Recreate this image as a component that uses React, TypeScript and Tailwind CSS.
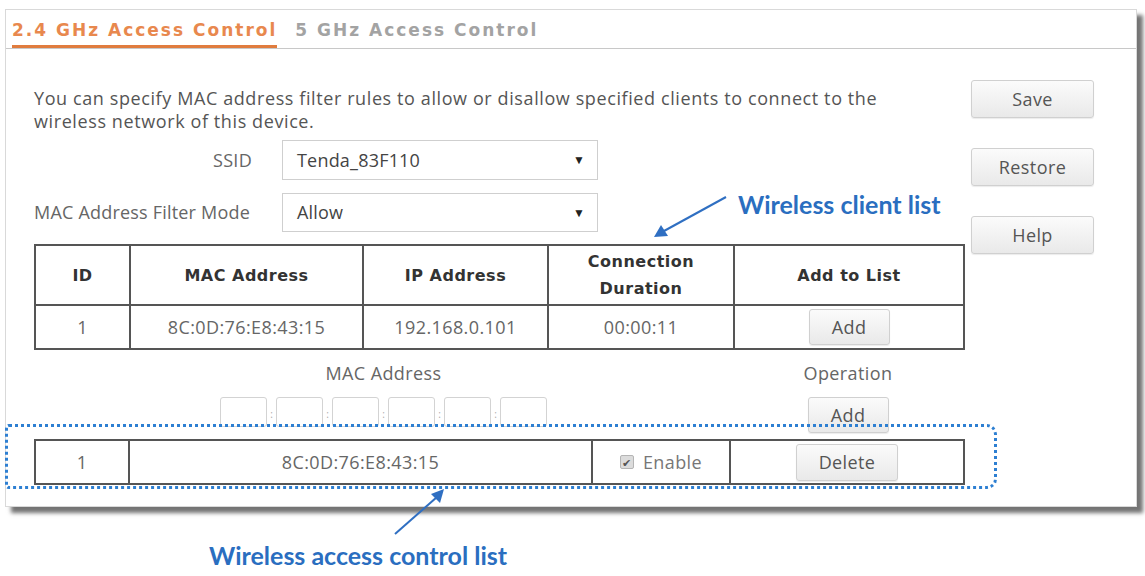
// Tenda router — wireless access control page (doc figure with callouts)

const BODY = { fontFamily: '"Open Sans", "Noto Sans", sans-serif' };
const HEAD = { fontFamily: '"DejaVu Sans", Verdana, sans-serif' };
const NOTE = { fontFamily: 'Lato, "Open Sans", sans-serif' };

const btn =
  'flex items-center justify-center rounded-[3px] border border-[#d0d0d0] bg-gradient-to-b from-[#fbfbfb] to-[#e9e9e9] text-[18px] tracking-[0.4px] text-[#555] shadow-[0_1px_1px_rgba(0,0,0,0.08)]';

function Select({ value, h }: { value: string; h: string }) {
  return (
    <div className={`flex w-[316px] ${h} items-center justify-between border border-[#cfcfcf] bg-white pl-[14px] pr-[12px] text-[18px] tracking-[0.2px] text-[#444]`}>
      <span>{value}</span>
      <span className="text-[12px] text-[#222]">▼</span>
    </div>
  );
}

const cell = 'border-2 border-[#555] text-center';

export default function App() {
  const macBoxes = [0, 1, 2, 3, 4, 5];
  return (
    <div className="relative h-[576px] w-[1145px] overflow-hidden bg-white" style={BODY}>
      {/* panel */}
      <div className="ml-[5px] mt-[9px] h-[498px] w-[1132px] border border-[#d9d9d9] bg-white shadow-[6px_6px_4px_rgba(0,0,0,0.55)]">
        {/* tabs */}
        <div className="flex h-[39px] items-end gap-[18px] border-b border-[#c8c8c8] pl-[6px]" style={HEAD}>
          <span className="border-b-[3px] border-[#e07c3e] pb-[2px] text-[17px] font-bold tracking-[2px] text-[#e8884e]">
            2.4 GHz Access Control
          </span>
          <span className="pb-[5px] text-[17px] font-bold tracking-[2px] text-[#a3a3a3]">5 GHz Access Control</span>
        </div>

        <div className="flex">
          {/* main column */}
          <div className="w-[957px] pl-[28px] pt-[38px]">
            <p className="text-[18px] leading-[23px] tracking-[0.6px] text-[#555]">
              You can specify MAC address filter rules to allow or disallow specified clients to connect to the
              <br />
              wireless network of this device.
            </p>

            <div className="mt-[7px] flex items-center gap-[30px]">
              <span className="w-[218px] text-right text-[18px] tracking-[0.3px] text-[#666]">SSID</span>
              <Select value="Tenda_83F110" h="h-[40px]" />
            </div>
            <div className="mt-[13px] flex items-center gap-[30px]">
              <span className="w-[218px] whitespace-nowrap text-left text-[18px] tracking-[0.2px] text-[#666]">
                MAC Address Filter Mode
              </span>
              <Select value="Allow" h="h-[39px]" />
            </div>

            {/* wireless client list */}
            <table className="mt-[12px] w-[929px] table-fixed border-collapse">
              <colgroup>
                <col className="w-[95px]" />
                <col className="w-[233px]" />
                <col className="w-[185px]" />
                <col className="w-[186px]" />
                <col className="w-[230px]" />
              </colgroup>
              <thead>
                <tr className="h-[60px] text-[16px] font-bold leading-[27px] tracking-[0.5px] text-[#333]" style={HEAD}>
                  <th className={cell}>ID</th>
                  <th className={cell}>MAC Address</th>
                  <th className={cell}>IP Address</th>
                  <th className={cell}>
                    Connection
                    <br />
                    Duration
                  </th>
                  <th className={cell}>Add to List</th>
                </tr>
              </thead>
              <tbody>
                <tr className="h-[44px] text-[18px] tracking-[0.4px] text-[#666]">
                  <td className={cell}>1</td>
                  <td className={cell}>8C:0D:76:E8:43:15</td>
                  <td className={cell}>192.168.0.101</td>
                  <td className={cell}>00:00:11</td>
                  <td className={cell}>
                    <div className="flex justify-center">
                      <button className={`${btn} h-[36px] w-[81px]`}>Add</button>
                    </div>
                  </td>
                </tr>
              </tbody>
            </table>

            {/* add rule row */}
            <div className="flex w-[929px]">
              <div className="flex w-[699px] flex-col items-center">
                <span className="mt-[12px] text-[18px] leading-[22px] tracking-[0.4px] text-[#666]">MAC Address</span>
                <div className="mt-[13px] flex items-start">
                  {macBoxes.map((i) => (
                    <div key={i} className="flex items-start">
                      {i > 0 && <span className="mt-[12px] w-[9px] text-center text-[10px] leading-[10px] text-[#aaa]">:</span>}
                      <div className="h-[30px] w-[47px] rounded-[3px] border border-[#d3d3d3] bg-white" />
                    </div>
                  ))}
                </div>
              </div>
              <div className="flex w-[230px] flex-col items-center">
                <span className="mt-[12px] text-[18px] leading-[22px] tracking-[0.4px] text-[#666]">Operation</span>
                <button className={`${btn} mt-[13px] h-[36px] w-[81px]`}>Add</button>
              </div>
            </div>

            {/* wireless access control list */}
            <table className="mt-[6px] w-[929px] table-fixed border-collapse">
              <colgroup>
                <col className="w-[94px]" />
                <col className="w-[463px]" />
                <col className="w-[138px]" />
                <col className="w-[234px]" />
              </colgroup>
              <tbody>
                <tr className="h-[44px] text-[18px] tracking-[0.4px] text-[#666]">
                  <td className={cell}>1</td>
                  <td className={cell}>8C:0D:76:E8:43:15</td>
                  <td className={cell}>
                    <label className="flex items-center justify-center gap-[9px]">
                      <span className="flex h-[14px] w-[14px] items-center justify-center rounded-[2px] border border-[#b5b5b5] bg-[#dcdcdc] text-[11px] leading-none text-[#555]">
                        ✔
                      </span>
                      <span className="text-[#777]">Enable</span>
                    </label>
                  </td>
                  <td className={cell}>
                    <div className="flex justify-center">
                      <button className={`${btn} h-[37px] w-[102px]`}>Delete</button>
                    </div>
                  </td>
                </tr>
              </tbody>
            </table>
          </div>

          {/* side buttons */}
          <div className="ml-[8px] flex w-[123px] flex-col gap-[30px] pt-[31px]">
            <button className={`${btn} h-[38px]`}>Save</button>
            <button className={`${btn} h-[38px]`}>Restore</button>
            <button className={`${btn} h-[38px]`}>Help</button>
          </div>
        </div>
      </div>

      {/* callouts */}
      <div className="pointer-events-none absolute left-[5px] top-[424px] h-[65px] w-[992px] rounded-r-[10px] rounded-l-[4px] border-[3px] border-dotted border-[#2d7fd2]" />
      <svg className="pointer-events-none absolute left-0 top-0" width="1145" height="576">
        <g stroke="#2f6fc2" strokeWidth="2" fill="#2f6fc2">
          <line x1="726" y1="197" x2="664" y2="231" />
          <polygon points="654,237 661,225 668,236" stroke="none" />
          <line x1="395" y1="534" x2="437" y2="497" />
          <polygon points="444,489 431,494 440,503" stroke="none" />
        </g>
      </svg>
      <span className="absolute left-[738px] top-[189px] text-[25px] font-bold leading-[30px] text-[#2a6ec0]" style={NOTE}>
        Wireless client list
      </span>
      <span className="absolute left-[209px] top-[540px] text-[25px] font-bold leading-[30px] text-[#2a6ec0]" style={NOTE}>
        Wireless access control list
      </span>
    </div>
  );
}
